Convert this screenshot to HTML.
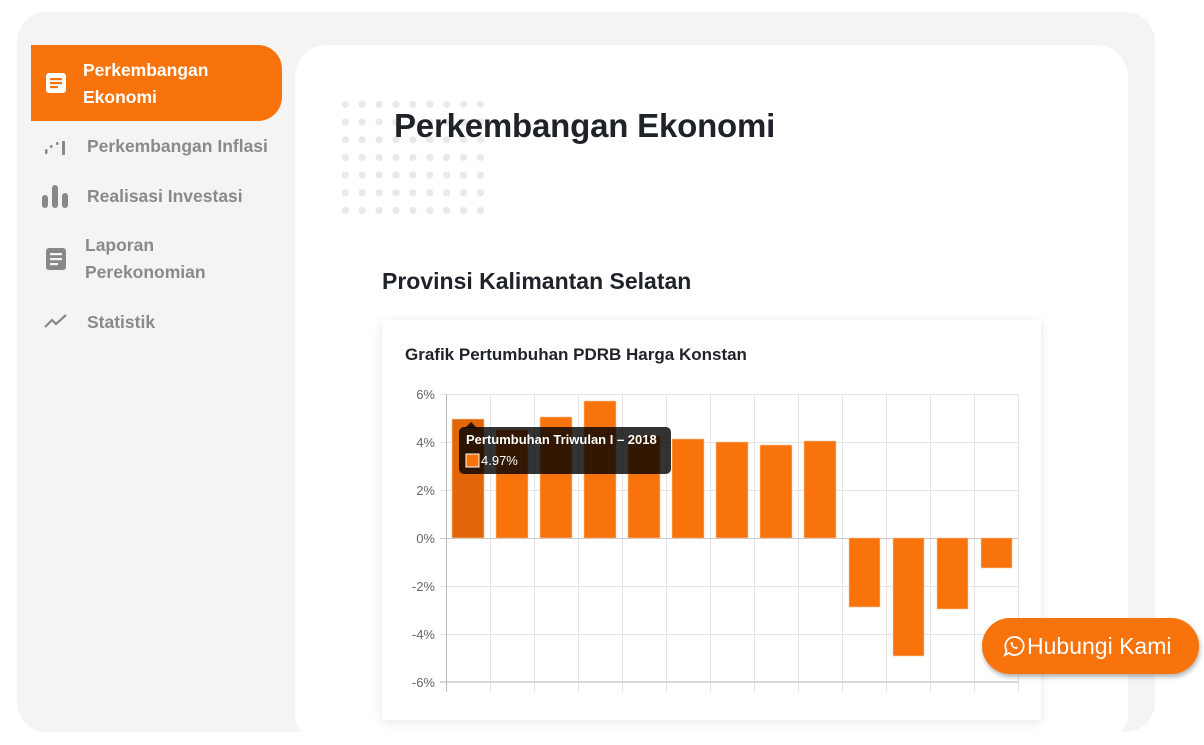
<!DOCTYPE html>
<html><head><meta charset="utf-8">
<style>
*{margin:0;padding:0;box-sizing:border-box}
body{width:1204px;height:706px;overflow:hidden;background:#fff;font-family:"Liberation Sans",sans-serif;position:relative}
.outer{position:absolute;left:17px;top:12px;width:1138px;height:720px;background:#f4f4f4;border-radius:30px}
.main{position:absolute;left:295px;top:45px;width:833px;height:700px;background:#fff;border-radius:32px}
.active{position:absolute;left:31px;top:45px;width:251px;height:76px;background:#f8730b;border-radius:0 24px 24px 0}
.nav{position:absolute;font-weight:bold;font-size:17.5px;color:#8a8a8a;line-height:27px}
.ic{position:absolute}
h1{position:absolute;left:394px;top:107px;font-size:33px;color:#1f2228;font-weight:bold;letter-spacing:-0.2px}
h2{position:absolute;left:382px;top:268px;font-size:23px;color:#1f2228;font-weight:bold}
.card{position:absolute;left:382px;top:320px;width:659px;height:400px;background:#fff;box-shadow:0 2px 10px rgba(0,0,0,.1)}
.ct{position:absolute;left:405px;top:345px;font-size:17px;font-weight:bold;color:#1f2228}
.btn{position:absolute;left:982px;top:618px;width:217px;height:56px;background:#f8730b;border-radius:28px;box-shadow:1px 3px 5px rgba(0,0,0,.3);color:#fff;font-size:23px;line-height:56px;padding-left:45px}
</style></head><body>
<div class="outer"></div>
<div class="main"></div>
<div class="active"></div>
<svg class="ic" style="left:46px;top:73px" width="20" height="20"><rect x="0" y="0" width="20" height="20" rx="3" fill="#fff"/><rect x="4" y="5" width="12" height="2.2" fill="#f8730b"/><rect x="4" y="9" width="12" height="2.2" fill="#f8730b"/><rect x="4" y="13" width="8" height="2.2" fill="#f8730b"/></svg>
<div class="nav" style="left:83px;top:57px;color:#fff">Perkembangan<br>Ekonomi</div>
<svg class="ic" style="left:44px;top:137px" width="24" height="20"><rect x="1" y="12" width="2.5" height="5" rx="1" fill="#888"/><rect x="6" y="8" width="2.5" height="3" rx="1" fill="#888"/><rect x="12" y="5" width="2.5" height="3" rx="1" fill="#888"/><rect x="18" y="4" width="3" height="14" rx="1" fill="#888"/></svg>
<div class="nav" style="left:87px;top:133px">Perkembangan Inflasi</div>
<svg class="ic" style="left:42px;top:183px" width="28" height="26"><rect x="0" y="12" width="6" height="13" rx="3" fill="#888"/><rect x="10" y="2" width="6" height="23" rx="3" fill="#888"/><rect x="20" y="10" width="6" height="15" rx="3" fill="#888"/></svg>
<div class="nav" style="left:87px;top:183px">Realisasi Investasi</div>
<svg class="ic" style="left:46px;top:248px" width="20" height="22"><rect x="0" y="0" width="20" height="22" rx="3" fill="#888"/><rect x="4" y="5" width="12" height="2.2" fill="#f4f4f4"/><rect x="4" y="10" width="12" height="2.2" fill="#f4f4f4"/><rect x="4" y="15" width="8" height="2.2" fill="#f4f4f4"/></svg>
<div class="nav" style="left:85px;top:232px">Laporan<br>Perekonomian</div>
<svg class="ic" style="left:44px;top:313px" width="24" height="16"><path d="M1 14 L8 7 L12 11 L22 2" stroke="#888" stroke-width="2.2" fill="none"/></svg>
<div class="nav" style="left:87px;top:309px">Statistik</div>

<svg class="ic" style="left:340px;top:99px" width="150" height="120">
<defs><pattern id="d" x="0" y="0" width="16.9" height="17.7" patternUnits="userSpaceOnUse"><circle cx="5.3" cy="5.3" r="3.6" fill="#e9e9e9"/></pattern></defs>
<rect x="0" y="0" width="150" height="120" fill="url(#d)"/>
</svg>
<h1>Perkembangan Ekonomi</h1>
<h2>Provinsi Kalimantan Selatan</h2>
<div class="card"></div>
<div class="ct">Grafik Pertumbuhan PDRB Harga Konstan</div>

<svg class="ic" style="left:0;top:0" width="1204" height="706" font-family="Liberation Sans,sans-serif">
<g stroke="#e3e3e3" stroke-width="1">
<line x1="440" y1="394.5" x2="1018" y2="394.5"/>
<line x1="440" y1="442.5" x2="1018" y2="442.5"/>
<line x1="440" y1="490.5" x2="1018" y2="490.5"/>
<line x1="440" y1="586.5" x2="1018" y2="586.5"/>
<line x1="440" y1="634.5" x2="1018" y2="634.5"/>
<line x1="490.5" y1="394" x2="490.5" y2="692"/><line x1="534.5" y1="394" x2="534.5" y2="692"/><line x1="578.5" y1="394" x2="578.5" y2="692"/><line x1="622.5" y1="394" x2="622.5" y2="692"/><line x1="666.5" y1="394" x2="666.5" y2="692"/><line x1="710.5" y1="394" x2="710.5" y2="692"/><line x1="754.5" y1="394" x2="754.5" y2="692"/><line x1="798.5" y1="394" x2="798.5" y2="692"/><line x1="842.5" y1="394" x2="842.5" y2="692"/><line x1="886.5" y1="394" x2="886.5" y2="692"/><line x1="930.5" y1="394" x2="930.5" y2="692"/><line x1="974.5" y1="394" x2="974.5" y2="692"/><line x1="1018.5" y1="394" x2="1018.5" y2="692"/>
</g>
<line x1="440" y1="682" x2="1018" y2="682" stroke="#d8d8d8" stroke-width="2"/>
<line x1="440" y1="538.5" x2="1018" y2="538.5" stroke="#c8c8c8"/>
<line x1="446.5" y1="394" x2="446.5" y2="692" stroke="#bbb"/>
<g fill="#f8730b" stroke="#fbc99e" stroke-width="0.6">
<rect x="452" y="419" width="32" height="119" fill="#e06608"/>
<rect x="496" y="430" width="32" height="108"/>
<rect x="540" y="417" width="32" height="121"/>
<rect x="584" y="401" width="32" height="137"/>
<rect x="628" y="436" width="32" height="102"/>
<rect x="672" y="439" width="32" height="99"/>
<rect x="716" y="442" width="32" height="96"/>
<rect x="760" y="445" width="32" height="93"/>
<rect x="804" y="441" width="32" height="97"/>
<rect x="849" y="538" width="31" height="69"/>
<rect x="893" y="538" width="31" height="118"/>
<rect x="937" y="538" width="31" height="71"/>
<rect x="981" y="538" width="31" height="30"/>
</g>
<g fill="#666" font-size="13" text-anchor="end">
<text x="435" y="399">6%</text><text x="435" y="447">4%</text><text x="435" y="495">2%</text><text x="435" y="543">0%</text><text x="435" y="591">-2%</text><text x="435" y="639">-4%</text><text x="435" y="687">-6%</text>
</g>
<path d="M465 428 L471 422 L477 428 Z" fill="rgba(0,0,0,.8)"/>
<rect x="459" y="427" width="212" height="47" rx="5" fill="rgba(0,0,0,.8)"/>
<text x="466" y="444" fill="#fff" font-size="13" font-weight="bold">Pertumbuhan Triwulan I – 2018</text>
<rect x="466" y="454" width="13" height="13" fill="#f8730b" stroke="#fff" stroke-width="1"/>
<text x="481" y="465" fill="#fff" font-size="13">4.97%</text>
</svg>

<div class="btn">Hubungi Kami</div>
<svg class="ic" style="left:1003px;top:635px" width="22" height="22"><path d="M11 2 A9 9 0 1 1 6 18 L2 20 L3.6 15.6 A9 9 0 0 1 11 2 Z" fill="none" stroke="#fff" stroke-width="1.8"/><path d="M7.5 7.5 C7.5 11 10.5 14 14 14 L15 12.5 L13 11.5 L12 12.3 C10.8 11.6 10 10.8 9.5 9.7 L10.3 8.8 L9.3 6.8 Z" fill="#fff"/></svg>
</body></html>
